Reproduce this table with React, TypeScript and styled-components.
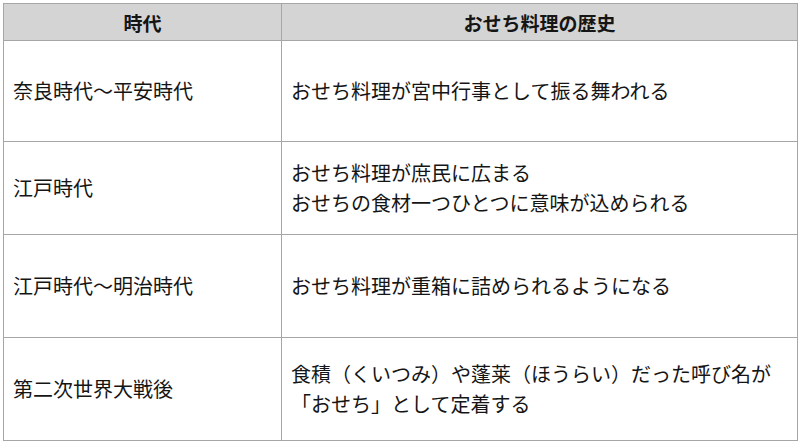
import React from "react";
import styled, { createGlobalStyle } from "styled-components";

const Global = createGlobalStyle`
  html, body { margin: 0; padding: 0; background: #ffffff; }
  body { font-family: "Noto Sans CJK JP", "Noto Sans", sans-serif; color: #151515; }
`;

const Page = styled.div`
  padding: 3px 0 0 3px;
`;

const Table = styled.table`
  border-collapse: collapse;
  width: 792px;
  table-layout: fixed;
  font-size: 20px;
`;

const HeadCell = styled.th<{ $w: number }>`
  width: ${(p) => p.$w}px;
  height: 36px;
  padding: 0;
  background: #d4d4d4;
  border: 1px solid #a6a6a6;
  font-weight: 700;
  font-size: 19px;
  text-align: center;
  vertical-align: middle;
  line-height: 1;
`;

const Row = styled.tr<{ $h: number }>`
  height: ${(p) => p.$h}px;
`;

const Cell = styled.td`
  padding: 0 8px 0 9px;
  border: 1px solid #a6a6a6;
  vertical-align: middle;
  line-height: 30px;
  white-space: nowrap;
`;

const rows: { era: string; lines: string[]; h: number }[] = [
  { era: "奈良時代～平安時代", lines: ["おせち料理が宮中行事として振る舞われる"], h: 101 },
  { era: "江戸時代", lines: ["おせち料理が庶民に広まる", "おせちの食材一つひとつに意味が込められる"], h: 93 },
  { era: "江戸時代～明治時代", lines: ["おせち料理が重箱に詰められるようになる"], h: 103 },
  {
    era: "第二次世界大戦後",
    lines: ["食積（くいつみ）や蓬莱（ほうらい）だった呼び名が", "「おせち」として定着する"],
    h: 103,
  },
];

export default function App() {
  return (
    <Page>
      <Global />
      <Table>
        <thead>
          <tr>
            <HeadCell $w={277}>時代</HeadCell>
            <HeadCell $w={515}>おせち料理の歴史</HeadCell>
          </tr>
        </thead>
        <tbody>
          {rows.map((r) => (
            <Row key={r.era} $h={r.h}>
              <Cell>{r.era}</Cell>
              <Cell>
                {r.lines.map((l, i) => (
                  <React.Fragment key={i}>
                    {i > 0 && <br />}
                    {l}
                  </React.Fragment>
                ))}
              </Cell>
            </Row>
          ))}
        </tbody>
      </Table>
    </Page>
  );
}
